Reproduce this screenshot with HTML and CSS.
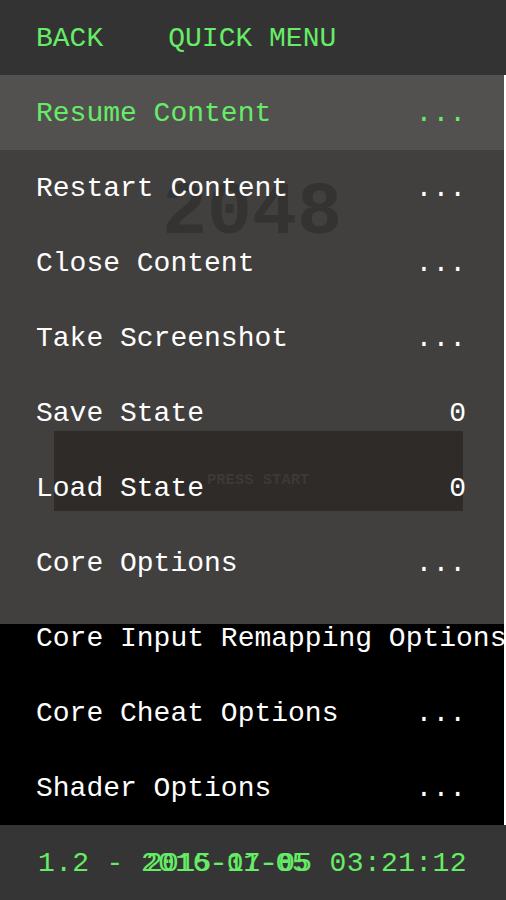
FILE: index.html
```html
<!DOCTYPE html>
<html>
<head>
<meta charset="utf-8">
<link rel="stylesheet" href="styles.css">
</head>
<body>
<div class="header">
  <span class="back">BACK</span>
  <span class="title">QUICK MENU</span>
</div>
<div class="menu">
  <div class="game">
    <div class="score">2048</div>
    <div class="startbox"><span>PRESS START</span></div>
  </div>
  <div class="row selected"><span>Resume Content</span><span>...</span></div>
  <div class="row"><span>Restart Content</span><span>...</span></div>
  <div class="row"><span>Close Content</span><span>...</span></div>
  <div class="row"><span>Take Screenshot</span><span>...</span></div>
  <div class="row"><span>Save State</span><span>0</span></div>
  <div class="row"><span>Load State</span><span>0</span></div>
  <div class="row"><span>Core Options</span><span>...</span></div>
  <div class="row"><span class="long">Core Input Remapping Options</span></div>
  <div class="row"><span>Core Cheat Options</span><span>...</span></div>
  <div class="row"><span>Shader Options</span><span>...</span></div>
</div>
<div class="footer">
  <span class="ver">1.2 - <span class="date">2016-07-05<span class="ghost">2015-11-05</span></span> 03:21:12</span>
</div>
</body>
</html>
```
FILE: styles.css
```css
html, body {
  margin: 0;
  padding: 0;
}
body {
  width: 506px;
  height: 900px;
  background: #ffffff;
  font-family: "Liberation Mono", "DejaVu Sans Mono", monospace;
  font-size: 28px;
  overflow: hidden;
}
.header {
  height: 75px;
  background: #333333;
  display: flex;
  align-items: center;
  padding-left: 36px;
  gap: 65px;
  color: #66ec66;
  padding-top: 1px;
  box-sizing: border-box;
}
.menu {
  position: relative;
  width: 504px;
  height: 750px;
  overflow: hidden;
  background: linear-gradient(to bottom, #41403f 0, #41403f 549px, #000000 549px, #000000 100%);
  color: #ffffff;
}
.game {
  position: absolute;
  inset: 0;
  z-index: 0;
}
.score {
  position: absolute;
  left: 162px;
  top: 101px;
  font-size: 75px;
  line-height: 1;
  font-weight: bold;
  color: #343332;
}
.startbox {
  position: absolute;
  left: 54px;
  top: 356px;
  width: 409px;
  height: 80px;
  background: #2e2b29;
}
.startbox span {
  position: absolute;
  left: 153px;
  top: 42px;
  font-size: 15.5px;
  line-height: 1;
  font-weight: bold;
  color: #3c3936;
}
.row {
  position: relative;
  z-index: 1;
  height: 75px;
  display: flex;
  align-items: center;
  justify-content: space-between;
  padding: 2px 38px 0 36px;
  box-sizing: border-box;
  white-space: nowrap;
}
.row.selected {
  background: #525150;
  color: #66ec66;
}
.footer {
  height: 75px;
  background: #353535;
  display: flex;
  align-items: center;
  padding-left: 38px;
  padding-top: 2px;
  box-sizing: border-box;
  color: #66ec66;
  white-space: nowrap;
  letter-spacing: 0.35px;
}
.date {
  position: relative;
}
.ghost {
  position: absolute;
  left: 5px;
  top: 0;
  letter-spacing: -0.6px;
}
```
